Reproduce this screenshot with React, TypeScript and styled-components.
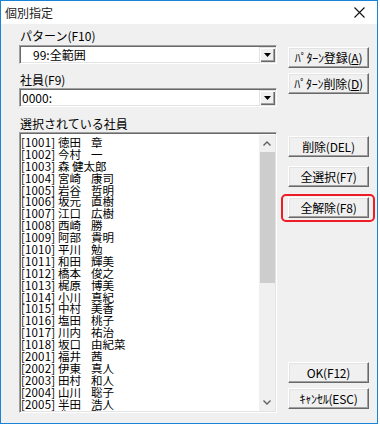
import React from "react";
import styled, { createGlobalStyle } from "styled-components";

const Global = createGlobalStyle`
  html, body { margin: 0; padding: 0; background: #ffffff; }
  body { font-family: "Noto Sans CJK JP", "Noto Sans", sans-serif; font-size: 12px; color: #000; }
`;

const Window = styled.div`
  width: 378px;
  height: 424px;
  box-sizing: border-box;
  border: 1px solid #1883d7;
  display: flex;
  flex-direction: column;
  background: #f0f0f0;
`;

const TitleBar = styled.div`
  height: 23px;
  flex: none;
  background: #ffffff;
  display: flex;
  align-items: center;
  justify-content: space-between;
  padding: 0 12px 0 4px;
  font-size: 12px;
  line-height: 14px;
  color: #222;
`;

const Content = styled.div`
  flex: 1;
  display: grid;
  grid-template-columns: 258px 81px;
  column-gap: 11px;
  padding: 0 0 10px 18px;
  min-height: 0;
`;

const LeftCol = styled.div`
  display: flex;
  flex-direction: column;
  padding-top: 5px;
  min-height: 0;
`;

const RightCol = styled.div`
  display: flex;
  flex-direction: column;
  padding-top: 23px;
  padding-bottom: 4px;
`;

const Label = styled.div<{ $top: number }>`
  margin-top: ${(p) => p.$top}px;
  height: 14px;
  line-height: 14px;
  font-size: 12px;
  padding-left: 1px;
  white-space: nowrap;
`;

const Combo = styled.div<{ $top: number }>`
  margin-top: ${(p) => p.$top}px;
  height: 19px;
  box-sizing: border-box;
  background: #fff;
  border-style: solid;
  border-width: 1px;
  border-color: #a0a0a0 #ffffff #ffffff #a0a0a0;
  box-shadow: inset 1px 1px 0 #696969, inset -1px -1px 0 #e3e3e3;
  display: flex;
  align-items: center;
  padding: 1px 1px 1px 2px;
`;

const ComboText = styled.div<{ $indent: number }>`
  flex: 1;
  padding-left: ${(p) => p.$indent}px;
  font-size: 12px;
  line-height: 14px;
  white-space: nowrap;
`;

const ArrowBtn = styled.div`
  width: 16px;
  height: 15px;
  box-sizing: border-box;
  background: #f0f0f0;
  box-shadow: inset 1px 1px 0 #e3e3e3, inset 2px 2px 0 #ffffff, inset -1px -1px 0 #696969, inset -2px -2px 0 #a0a0a0;
  display: flex;
  align-items: center;
  justify-content: center;
`;

const ListBox = styled.div`
  margin-top: 1px;
  flex: 1;
  min-height: 0;
  box-sizing: border-box;
  background: #fff;
  border-style: solid;
  border-width: 1px;
  border-color: #a0a0a0 #ffffff #ffffff #a0a0a0;
  box-shadow: inset 1px 1px 0 #696969, inset -1px -1px 0 #e3e3e3;
  padding: 2px 1px 1px 1px;
  display: flex;
`;

const Items = styled.div`
  flex: 1;
  overflow: hidden;
  padding-top: 1px;
`;

const Row = styled.div`
  display: flex;
  height: 11.9px;
  line-height: 12px;
  font-size: 11.5px;
  white-space: nowrap;
  color: #000;
`;

const Code = styled.span`
  width: 37px;
  flex: none;
  letter-spacing: 0.15px;
`;

const Last = styled.span<{ $w: number }>`
  width: ${(p) => p.$w}px;
  flex: none;
`;

const Scroll = styled.div`
  width: 16px;
  flex: none;
  background: #f0f0f0;
  display: flex;
  flex-direction: column;
  align-items: center;
`;

const ScrollArrow = styled.div`
  height: 17px;
  width: 16px;
  display: flex;
  align-items: center;
  justify-content: center;
  flex: none;
`;

const Thumb = styled.div`
  width: 15px;
  height: 131px;
  background: #cdcdcd;
  flex: none;
`;

const Track = styled.div`
  flex: 1;
`;

const Button = styled.div<{ $top: number }>`
  margin-top: ${(p) => p.$top}px;
  height: 21px;
  box-sizing: border-box;
  background: #f0f0f0;
  border-style: solid;
  border-width: 1px;
  border-color: #ffffff #696969 #696969 #ffffff;
  box-shadow: inset -1px -1px 0 #a0a0a0, inset 1px 1px 0 #e3e3e3;
  display: flex;
  align-items: center;
  justify-content: center;
  font-size: 12px;
  line-height: 14px;
  white-space: nowrap;
  position: relative;
  letter-spacing: -0.2px;
`;

const Highlight = styled.div`
  position: absolute;
  left: -8px;
  top: -4px;
  right: -7px;
  bottom: -5px;
  border: 2px solid #ee1c25;
  border-radius: 5px;
  pointer-events: none;
`;

const Spacer = styled.div`
  flex: 1;
`;

const U = styled.span`
  text-decoration: underline;
  text-underline-offset: 1px;
`;

const Tri = () => (
  <svg width="7" height="4" viewBox="0 0 7 4">
    <polygon points="0,0 7,0 3.5,4" fill="#000" />
  </svg>
);

const Chevron = ({ up }: { up?: boolean }) => (
  <svg width="8" height="5" viewBox="0 0 8 5">
    <polyline
      points={up ? "0.5,4.5 4,1 7.5,4.5" : "0.5,0.5 4,4 7.5,0.5"}
      fill="none"
      stroke="#606060"
      strokeWidth="1.4"
    />
  </svg>
);

const employees: [string, string, string][] = [
  ["1001", "徳田", "章"],
  ["1002", "今村", "一"],
  ["1003", "森 健太郎", ""],
  ["1004", "宮崎", "康司"],
  ["1005", "岩谷", "哲明"],
  ["1006", "坂元", "直樹"],
  ["1007", "江口", "広樹"],
  ["1008", "西崎", "勝"],
  ["1009", "阿部", "貴明"],
  ["1010", "平川", "勉"],
  ["1011", "和田", "輝美"],
  ["1012", "橋本", "俊之"],
  ["1013", "梶原", "博美"],
  ["1014", "小川", "真紀"],
  ["1015", "中村", "美香"],
  ["1016", "塩田", "桃子"],
  ["1017", "川内", "祐治"],
  ["1018", "坂口", "由紀菜"],
  ["2001", "福井", "茜"],
  ["2002", "伊東", "真人"],
  ["2003", "田村", "和人"],
  ["2004", "山川", "聡子"],
  ["2005", "半田", "浩人"],
  ["2006", "豊川", "聡"],
];

export default function App() {
  return (
    <>
      <Global />
      <Window>
        <TitleBar>
          <span>個別指定</span>
          <svg width="11" height="11" viewBox="0 0 11 11">
            <path d="M0.5 0.5 L10.5 10.5 M10.5 0.5 L0.5 10.5" stroke="#111" strokeWidth="1.1" />
          </svg>
        </TitleBar>
        <Content>
          <LeftCol>
            <Label $top={0}>パターン(F10)</Label>
            <Combo $top={2}>
              <ComboText $indent={11}>99:全範囲</ComboText>
              <ArrowBtn><Tri /></ArrowBtn>
            </Combo>
            <Label $top={9}>社員(F9)</Label>
            <Combo $top={1}>
              <ComboText $indent={0}>0000:</ComboText>
              <ArrowBtn><Tri /></ArrowBtn>
            </Combo>
            <Label $top={10}>選択されている社員</Label>
            <ListBox>
              <Items>
                {employees.map(([id, last, first]) => (
                  <Row key={id}>
                    <Code>[{id}]</Code>
                    <Last $w={first ? 33 : 80}>{last}</Last>
                    <span>{first}</span>
                  </Row>
                ))}
              </Items>
              <Scroll>
                <ScrollArrow><Chevron up /></ScrollArrow>
                <Thumb />
                <Track />
                <ScrollArrow><Chevron /></ScrollArrow>
              </Scroll>
            </ListBox>
          </LeftCol>
          <RightCol>
            <Button $top={0}>ﾊﾟﾀｰﾝ登録(<U>A</U>)</Button>
            <Button $top={5}>ﾊﾟﾀｰﾝ削除(<U>D</U>)</Button>
            <Button $top={42}>削除(DEL)</Button>
            <Button $top={9}>全選択(F7)</Button>
            <Button $top={10}>
              全解除(F8)
              <Highlight />
            </Button>
            <Spacer />
            <Button $top={0}>OK(F12)</Button>
            <Button $top={5}>ｷｬﾝｾﾙ(ESC)</Button>
          </RightCol>
        </Content>
      </Window>
    </>
  );
}
